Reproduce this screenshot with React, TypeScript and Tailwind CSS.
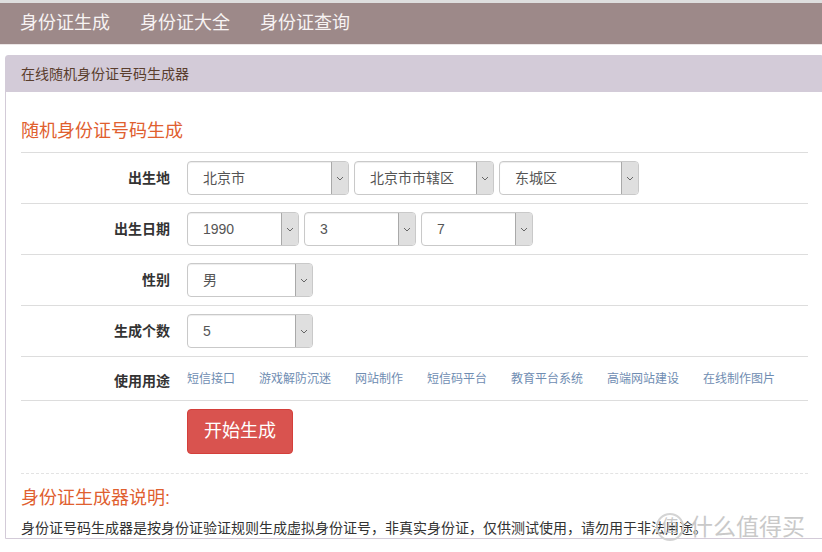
import React from "react"

const font = "font-['Liberation_Sans','Noto_Sans_CJK_SC',sans-serif]"

function Select({ value, width }: { value: string; width: string }) {
  return (
    <div
      className={`flex h-[34px] ${width} rounded-[4px] border border-[#c9c9c9] bg-white shadow-[inset_0_1px_1px_rgba(0,0,0,0.075)]`}
    >
      <span className="flex-1 pl-[15px] text-[14px] leading-[32px] text-[#555]">{value}</span>
      <span className="flex w-[17px] items-center justify-center rounded-r-[3px] border-l border-[#a9a9a9] bg-[#dfdfdf]">
        <svg width="8" height="5" viewBox="0 0 8 5" fill="none">
          <path d="M1 1 L4 4 L7 1" stroke="#666" strokeWidth="1" />
        </svg>
      </span>
    </div>
  )
}

function Row({ label, children }: { label: string; children: React.ReactNode }) {
  return (
    <div className="flex items-center border-t border-[#dddddd] py-[8px]">
      <div className="w-[166px] pr-[17px] text-right text-[14px] font-bold text-[#333]">{label}</div>
      <div className="flex gap-[5px]">{children}</div>
    </div>
  )
}

const uses = ["短信接口", "游戏解防沉迷", "网站制作", "短信码平台", "教育平台系统", "高端网站建设", "在线制作图片"]

export default function App() {
  return (
    <div className={`relative min-h-screen overflow-hidden bg-white text-[#333] ${font}`}>
      {/* Top nav */}
      <nav className="border-t-[3px] border-b border-t-[#dedede] border-b-[#ebe6e6] bg-[#9d8989]">
        <ul className="flex pl-[5px]">
          {["身份证生成", "身份证大全", "身份证查询"].map((t) => (
            <li key={t} className="px-[15px] text-[18px] leading-[41px] text-[#f7f3f3]">
              {t}
            </li>
          ))}
        </ul>
      </nav>

      {/* Panel */}
      <div className="ml-[5px] mt-[10px] w-[819px] rounded-t-[3px] border border-[#d3cbd8]">
        <div className="flex h-[36px] items-center bg-[#d3cbd8] px-[15px] text-[14px] text-[#5a3e2e]">
          在线随机身份证号码生成器
        </div>

        <div className="px-[15px]">
          <h3 className="mb-[11px] pt-[29px] text-[18px] leading-[20px] text-[#e0602f]">随机身份证号码生成</h3>

          <Row label="出生地">
            <Select value="北京市" width="w-[162px]" />
            <Select value="北京市市辖区" width="w-[140px]" />
            <Select value="东城区" width="w-[140px]" />
          </Row>

          <Row label="出生日期">
            <Select value="1990" width="w-[112px]" />
            <Select value="3" width="w-[112px]" />
            <Select value="7" width="w-[112px]" />
          </Row>

          <Row label="性别">
            <Select value="男" width="w-[126px]" />
          </Row>

          <Row label="生成个数">
            <Select value="5" width="w-[126px]" />
          </Row>

          <div className="flex h-[44px] items-center border-t border-[#dddddd]">
            <div className="w-[166px] pr-[17px] pt-[5px] text-right text-[14px] font-bold text-[#333]">使用用途</div>
            <div className="flex gap-[24px] text-[12px] text-[#6f8db2]">
              {uses.map((u) => (
                <span key={u}>{u}</span>
              ))}
            </div>
          </div>

          <div className="border-t border-[#dddddd] pl-[166px] pt-[8px]">
            <button className="h-[45px] w-[106px] rounded-[4px] border border-[#d43f3a] bg-[#d9534f] text-[18px] text-white">
              开始生成
            </button>
          </div>

          <div className="mt-[19px] border-t border-dashed border-[#e3e3e3] pt-[14px]">
            <h3 className="text-[18px] leading-[20px] text-[#e0602f]">身份证生成器说明:</h3>
            <p className="mt-[10px] text-[14px] leading-[20px] text-[#333]">
              身份证号码生成器是按身份证验证规则生成虚拟身份证号，非真实身份证，仅供测试使用，请勿用于非法用途。
            </p>
          </div>
        </div>
      </div>

      {/* watermark */}
      <div className="pointer-events-none absolute left-[656px] top-[513px] flex items-center gap-[6px] text-[#c4c4c4] opacity-90">
        <span className="flex h-[28px] w-[28px] items-center justify-center rounded-full border-2 border-[#d0d0d0] text-[17px]">
          值
        </span>
        <span className="text-[23px] leading-[28px]">什么值得买</span>
      </div>
    </div>
  )
}
